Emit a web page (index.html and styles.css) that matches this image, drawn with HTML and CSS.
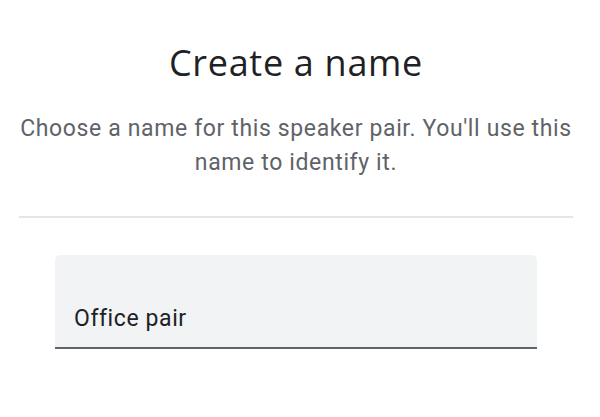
FILE: index.html
```html
<!DOCTYPE html>
<html>
<head>
<meta charset="utf-8">
<link rel="stylesheet" href="styles.css">
</head>
<body>
<main class="page">
  <h1 class="title">Create a name</h1>
  <p class="subtitle">Choose a name for this speaker pair. You'll use this name to identify it.</p>
  <hr class="divider">
  <div class="field">
    <span class="field-value">Office pair</span>
  </div>
</main>
</body>
</html>
```
FILE: styles.css
```css
html, body {
  margin: 0;
  padding: 0;
  background: #ffffff;
}
.page {
  width: 600px;
  height: 417px;
  display: flex;
  flex-direction: column;
  align-items: center;
  box-sizing: border-box;
  padding: 39px 8px 0 0;
}
.title {
  margin: 0;
  font-family: "Open Sans", sans-serif;
  font-weight: 400;
  font-size: 36px;
  letter-spacing: 0.7px;
  line-height: 48px;
  color: #202124;
}
.subtitle {
  margin: 25px 0 0;
  width: 570px;
  text-align: center;
  font-family: Roboto, sans-serif;
  font-size: 23px;
  letter-spacing: 0.63px;
  line-height: 34px;
  color: #5f6368;
}
.divider {
  margin: 36px 0 0;
  width: 554px;
  height: 2px;
  border: 0;
  background: #e6e6e6;
}
.field {
  margin-top: 37px;
  width: 482px;
  height: 94px;
  box-sizing: border-box;
  background: #f1f3f4;
  border-radius: 5px 5px 0 0;
  border-bottom: 2px solid #5f6368;
  display: flex;
  align-items: flex-end;
  padding: 0 19px 14px;
}
.field-value {
  font-family: Roboto, sans-serif;
  font-size: 23px;
  letter-spacing: 0.6px;
  line-height: 28px;
  color: #202124;
}
```
